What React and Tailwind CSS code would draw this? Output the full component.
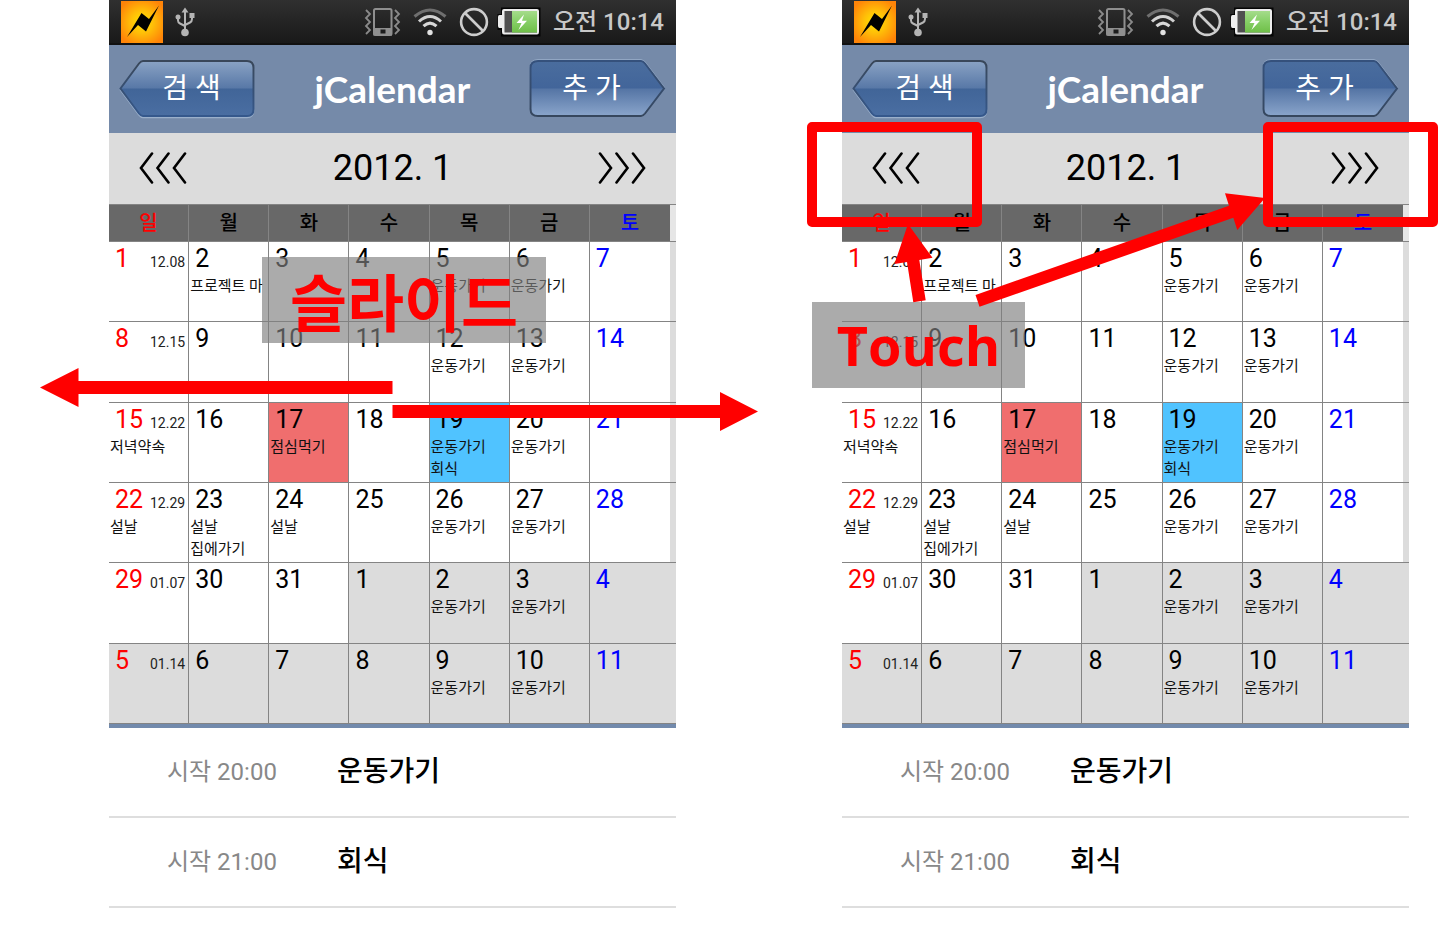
import React from "react";

const WEEKDAYS = ["일", "월", "화", "수", "목", "금", "토"];
const GYM = "운동가기";

const WEEKS = [
  {
    lunar: "12.08",
    days: [
      { n: 1 },
      { n: 2, events: ["프로젝트 마"] },
      { n: 3 },
      { n: 4 },
      { n: 5, events: [GYM] },
      { n: 6, events: [GYM] },
      { n: 7 },
    ],
  },
  {
    lunar: "12.15",
    days: [
      { n: 8 },
      { n: 9 },
      { n: 10 },
      { n: 11 },
      { n: 12, events: [GYM] },
      { n: 13, events: [GYM] },
      { n: 14 },
    ],
  },
  {
    lunar: "12.22",
    days: [
      { n: 15, events: ["저녁약속"] },
      { n: 16 },
      { n: 17, events: ["점심먹기"], bg: "bg-[#f06e6e]" },
      { n: 18 },
      { n: 19, events: [GYM, "회식"], bg: "bg-[#50c3ff]" },
      { n: 20, events: [GYM] },
      { n: 21 },
    ],
  },
  {
    lunar: "12.29",
    days: [
      { n: 22, events: ["설날"] },
      { n: 23, events: ["설날", "집에가기"] },
      { n: 24, events: ["설날"] },
      { n: 25 },
      { n: 26, events: [GYM] },
      { n: 27, events: [GYM] },
      { n: 28 },
    ],
  },
  {
    lunar: "01.07",
    days: [
      { n: 29 },
      { n: 30 },
      { n: 31 },
      { n: 1, bg: "bg-[#dcdcdc]" },
      { n: 2, events: [GYM], bg: "bg-[#dcdcdc]" },
      { n: 3, events: [GYM], bg: "bg-[#dcdcdc]" },
      { n: 4, bg: "bg-[#dcdcdc]" },
    ],
  },
  {
    lunar: "01.14",
    days: [
      { n: 5, bg: "bg-[#dcdcdc]" },
      { n: 6, bg: "bg-[#dcdcdc]" },
      { n: 7, bg: "bg-[#dcdcdc]" },
      { n: 8, bg: "bg-[#dcdcdc]" },
      { n: 9, events: [GYM], bg: "bg-[#dcdcdc]" },
      { n: 10, events: [GYM], bg: "bg-[#dcdcdc]" },
      { n: 11, bg: "bg-[#dcdcdc]" },
    ],
  },
];

const AGENDA = [
  { time: "시작 20:00", title: "운동가기" },
  { time: "시작 21:00", title: "회식" },
];

function dayColor(i) {
  if (i === 0) return "text-[#ff0000]";
  if (i === 6) return "text-[#0000ff]";
  return "text-black";
}

function AppIcon({ id }) {
  return (
    <svg width="42" height="42" viewBox="0 0 42 42" aria-hidden="true">
      <defs>
        <radialGradient id={`glow-${id}`} cx="50%" cy="50%" r="60%">
          <stop offset="0" stopColor="#ffe600" />
          <stop offset="0.45" stopColor="#ffbe08" />
          <stop offset="1" stopColor="#ff8408" />
        </radialGradient>
      </defs>
      <rect width="42" height="42" fill={`url(#glow-${id})`} />
      <path d="M38 4.500 L25 30.500 L17 24 L6 36 L20.500 12 L28 18 Z" fill="#000" />
    </svg>
  );
}

function UsbIcon() {
  return (
    <svg width="20" height="30" viewBox="0 0 20 30" aria-hidden="true" fill="none" stroke="#b4b4b4" strokeWidth="2">
      <path d="M10 4 V26" />
      <path d="M3 9 V13.5 Q3 15.5 5 16.5 L10 19" />
      <path d="M17 8 V12 Q17 14.5 15 15.5 L10 18" />
      <path d="M10 0.5 L13.5 5.5 H6.5 Z" fill="#b4b4b4" stroke="none" />
      <circle cx="10" cy="25.5" r="3.8" fill="#b4b4b4" stroke="none" />
      <circle cx="3" cy="10" r="2.5" fill="#b4b4b4" stroke="none" />
      <rect x="14.5" y="6" width="5" height="5" fill="#b4b4b4" stroke="none" />
    </svg>
  );
}

function VibrateIcon() {
  return (
    <svg width="37" height="28" viewBox="0 0 37 28" aria-hidden="true" fill="none">
      <path d="M2 2 L6 6 L2 10 L6 14 L2 18 L6 22 L2 26" stroke="#8a8a8a" strokeWidth="1.8" />
      <path d="M31 2 L35 6 L31 10 L35 14 L31 18 L35 22 L31 26" stroke="#8a8a8a" strokeWidth="1.8" />
      <rect x="10" y="1" width="17.500" height="26" rx="1.500" stroke="#8f8f8f" strokeWidth="2" />
      <rect x="9.500" y="20" width="18.500" height="7.500" fill="#8f8f8f" />
      <rect x="16.500" y="21.500" width="5" height="4" fill="#1c1c1c" />
    </svg>
  );
}

function WifiIcon() {
  return (
    <svg width="34" height="28" viewBox="0 0 34 28" aria-hidden="true" fill="none" strokeWidth="3">
      <path d="M1.500 8.500 Q17 -4.500 32.500 8.500" stroke="#6f6f6f" />
      <path d="M6 13.500 Q17 3.500 28 13.500" stroke="#d2d2d2" />
      <path d="M10.500 18.200 Q17 12 23.500 18.200" stroke="#d8d8d8" />
      <circle cx="17" cy="24.500" r="2.700" fill="#e2e2e2" />
    </svg>
  );
}

function BlockedIcon() {
  return (
    <svg width="30" height="30" viewBox="0 0 30 30" aria-hidden="true" fill="none" stroke="#cdcdcd" strokeWidth="2.600">
      <circle cx="15" cy="15" r="12.900" />
      <path d="M6 6 L24 24" />
    </svg>
  );
}

function BatteryIcon({ id }) {
  return (
    <svg width="44" height="30" viewBox="0 0 44 30" aria-hidden="true">
      <defs>
        <linearGradient id={`cell-${id}`} x1="0" x2="0" y1="0" y2="1">
          <stop offset="0" stopColor="#a5dc8c" />
          <stop offset="0.500" stopColor="#86cf66" />
          <stop offset="1" stopColor="#6fbf48" />
        </linearGradient>
      </defs>
      <path d="M4 0.500 H43.500 V29.500 H4 V23 H0.500 V7 H4 Z" fill="#050505" />
      <path d="M7 2 H40 Q42 2 42 4 V25 Q42 27.500 40 27.500 H7 Q5 27.500 5 25 V21 H2.500 Q1 21 1 19 V10 Q1 8 2.500 8 H5 V4 Q5 2 7 2 Z" fill="#ededed" />
      <rect x="7.500" y="4" width="32.500" height="21.500" fill="#505050" />
      <rect x="15" y="4" width="25" height="21.500" fill={`url(#cell-${id})`} />
      <path d="M27 7.500 L19.500 16 H24.500 L21.500 23 L30 13.800 H25 Z" fill="#fff" />
    </svg>
  );
}

function StatusBar({ id }) {
  return (
    <div className="flex h-[45px] items-center justify-between border-b-2 border-[#111111] bg-linear-to-b from-[#303030] to-[#191919] px-3">
      <div className="flex items-center gap-3">
        <AppIcon id={id} />
        <UsbIcon />
      </div>
      <div className="flex items-center gap-2">
        <div className="flex items-center gap-3">
          <VibrateIcon />
          <WifiIcon />
          <BlockedIcon />
        </div>
        <BatteryIcon id={id} />
        <span className="pl-1 text-[24px] leading-[30px] font-medium whitespace-nowrap text-[#c8c8c8]">오전 10:14</span>
      </div>
    </div>
  );
}

function ArrowButton({ id, side, children }) {
  const isBack = side === "left";
  const shape = isBack
    ? "M24 2 H128 Q134.500 2 134.500 9 V50 Q134.500 57 128 57 H24 Q22 57 20 54.500 L1.500 29.500 L20 4.500 Q22 2 24 2 Z"
    : "M9 2 H112 Q114 2 116 4.500 L135 29.500 L116 54.500 Q114 57 112 57 H9 Q1.500 57 1.500 50 V9 Q1.500 2 9 2 Z";
  return (
    <button type="button" className="grid cursor-pointer place-items-center">
      <svg width="137" height="60" viewBox="0 0 137 60" aria-hidden="true" className="col-start-1 row-start-1">
        <defs>
          <linearGradient id={`btn-${side}-${id}`} x1="0" x2="0" y1="0" y2="1">
            <stop offset="0" stopColor={isBack ? "#8aa3c4" : "#4a6d9e"} />
            <stop offset="0.490" stopColor={isBack ? "#5878a7" : "#42659a"} />
            <stop offset="0.510" stopColor={isBack ? "#416598" : "#5575a5"} />
            <stop offset="1" stopColor={isBack ? "#4a6ea2" : "#8aa5cb"} />
          </linearGradient>
          <linearGradient id={`edge-${side}-${id}`} x1="0" x2="0" y1="0" y2="1">
            <stop offset="0" stopColor={isBack ? "#394759" : "#35517c"} />
            <stop offset="1" stopColor={isBack ? "#35588c" : "#36475e"} />
          </linearGradient>
        </defs>
        <path d={shape} fill="none" stroke="#9bb0cb" strokeWidth="1.500" transform={isBack ? "translate(0 1.500)" : "translate(0 -1)"} />
        <path d={shape} fill={`url(#btn-${side}-${id})`} stroke={`url(#edge-${side}-${id})`} strokeWidth="2" />
      </svg>
      <span className={`col-start-1 row-start-1 text-[28px] leading-[36px] text-white ${isBack ? "pl-2" : "pr-3"}`}>
        {children}
      </span>
    </button>
  );
}

function Chevrons({ flip }) {
  return (
    <svg width="48" height="32" viewBox="0 0 48 32" aria-hidden="true" fill="none" stroke="#000" strokeWidth="2.600" strokeLinecap="round">
      <g transform={flip ? "matrix(-1 0 0 1 48 0)" : undefined}>
        <path d="M13 1.500 L2 16 L13 30.500" />
        <path d="M29.500 1.500 L18.500 16 L29.500 30.500" />
        <path d="M46 1.500 L35 16 L46 30.500" />
      </g>
    </svg>
  );
}

function MonthTable() {
  return (
    <table className="w-full table-fixed border-separate border-spacing-0 border-b-4 border-[#728aac]">
      <colgroup>
        {WEEKDAYS.map((d) => (
          <col key={d} />
        ))}
        <col className="w-[6px]" />
      </colgroup>
      <thead>
        <tr className="h-[38px]">
          {WEEKDAYS.map((d, i) => (
            <th
              key={d}
              scope="col"
              className={`border-y border-[#848484] bg-[#686868] p-0 text-center text-[20px] leading-[28px] font-medium ${i < 6 ? "border-r" : ""} ${dayColor(i)}`}
            >
              {d}
            </th>
          ))}
          <td className="border-y border-[#848484] bg-[#e6e6e6] p-0" />
        </tr>
      </thead>
      <tbody>
        {WEEKS.map((week) => (
          <tr key={week.lunar} className="h-[80px] nth-[3n+2]:h-[81px]">
            {week.days.map((day, i) => (
              <td
                key={day.n}
                className={`border-b border-[#848484] p-0 align-top ${i < 6 ? "border-r" : ""} ${day.bg || "bg-white"}`}
              >
                <div className={`flex h-[33px] items-baseline justify-between pt-[2px] pr-[3px] pl-[6px] text-[25px] leading-[30px] ${dayColor(i)}`}>
                  <span>{day.n}</span>
                  {i === 0 && <span className="text-[14px] text-[#222222]">{week.lunar}</span>}
                </div>
                <ul className="pl-px text-[15px] leading-[22px] whitespace-nowrap text-[#111111]">
                  {(day.events || []).map((e) => (
                    <li key={e}>{e}</li>
                  ))}
                </ul>
              </td>
            ))}
            <td className="border-b border-[#848484] bg-[#dcdcdc] p-0" />
          </tr>
        ))}
      </tbody>
    </table>
  );
}

function Phone({ id, children }) {
  return (
    <section className="relative min-w-0 flex-1 bg-white" aria-label="jCalendar">
      <StatusBar id={id} />
      <header className="flex h-[88px] items-center justify-between bg-[#758aa9] px-[10px]">
        <ArrowButton id={id} side="left">검 색</ArrowButton>
        <h1 className="font-[Lato,sans-serif] text-[37px] leading-[44px] font-bold text-white">jCalendar</h1>
        <ArrowButton id={id} side="right">추 가</ArrowButton>
      </header>
      <nav className="flex h-[71px] items-center justify-between bg-[#dcdcdc] px-[30px] pb-[2px]">
        <button type="button" aria-label="이전 달" className="cursor-pointer">
          <Chevrons />
        </button>
        <h2 className="text-[36px] leading-[44px] text-black">2012. 1</h2>
        <button type="button" aria-label="다음 달" className="cursor-pointer">
          <Chevrons flip />
        </button>
      </nav>
      <MonthTable />
      <ul>
        {AGENDA.map((item) => (
          <li key={item.time} className="flex h-[90px] items-center border-b-2 border-[#dedede] pl-[58px]">
            <span className="w-[170px] text-[24px] leading-[32px] text-[#888888]">{item.time}</span>
            <span className="text-[28px] leading-[36px] font-medium text-black">{item.title}</span>
          </li>
        ))}
      </ul>
      {children}
    </section>
  );
}

export default function App() {
  return (
    <main className="flex min-h-screen items-start gap-[166px] overflow-x-hidden bg-white pr-[29px] pl-[109px] font-[Roboto,'Noto_Sans_CJK_KR',sans-serif]">
      <Phone id="slide">
        <p className="absolute top-[257px] left-[153px] flex h-[86px] w-[284px] items-center justify-center bg-[rgba(128,128,128,0.66)] font-['Noto_Sans_CJK_KR',sans-serif] text-[62px] leading-[86px] font-bold whitespace-nowrap text-[#ff0000]">
          슬라이드
        </p>
        <svg className="pointer-events-none absolute top-[367px] left-[-69px]" width="718" height="64" viewBox="0 0 718 64" fill="#ff0000" aria-hidden="true">
          <path d="M0 20.500 L38.500 1 V14 H352.500 V27 H38.500 V40 Z" />
          <path d="M718 44.500 L680 25 V38 H352.500 V51 H680 V64 Z" />
        </svg>
      </Phone>
      <Phone id="touch">
        <p className="absolute top-[302px] left-[-30px] flex h-[86px] w-[213px] items-center justify-center bg-[rgba(128,128,128,0.66)] font-['Open_Sans',sans-serif] text-[54px] leading-[86px] font-bold text-[#ff0000]">
          Touch
        </p>
        <svg className="pointer-events-none absolute top-[122px] left-[-35px]" width="631" height="190" viewBox="807 122 631 190" aria-hidden="true">
          <g fill="none" stroke="#ff0000" strokeWidth="10" strokeLinejoin="round">
            <rect x="812" y="127" width="165" height="95" />
            <rect x="1268" y="127" width="165" height="95" />
          </g>
          <g fill="#ff0000">
            <path d="M908 224 L932.500 257.800 L919.300 260 L925.700 300.200 L913.300 302.200 L907 262 L894.500 264 Z" />
            <path d="M1265 198 L1237.300 230 L1233.300 217.800 L979.500 306.800 L975.500 295 L1229 205.800 L1225 193.200 Z" />
          </g>
        </svg>
      </Phone>
    </main>
  );
}
